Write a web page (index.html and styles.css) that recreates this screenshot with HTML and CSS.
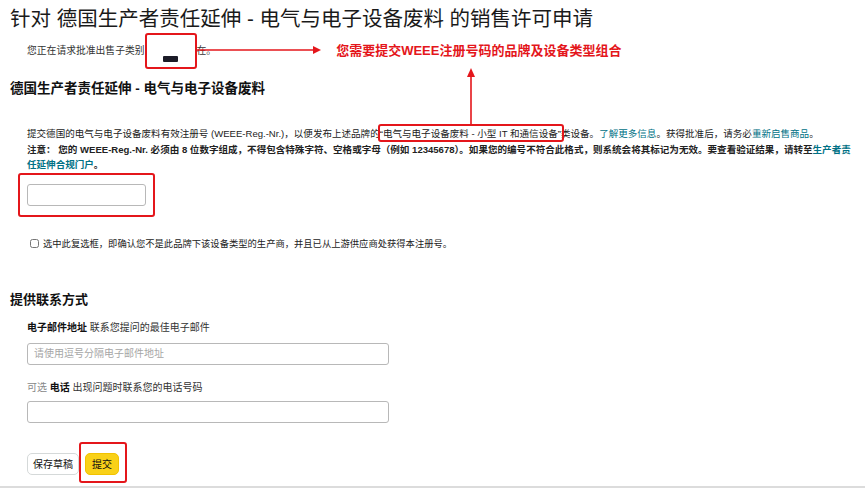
FILE: index.html
```html
<!DOCTYPE html>
<html lang="zh-CN">
<head>
  <meta charset="UTF-8" />
  <meta name="viewport" content="width=device-width, initial-scale=1.0"/>
  <title>销售许可申请</title>
  <link rel="stylesheet" href="styles.css">
</head>
<body>
  <div class="page">
    <h1 class="title">针对 德国生产者责任延伸 - 电气与电子设备废料 的销售许可申请</h1>

    <!-- 申请说明 + 标注 -->
    <div class="intro">
      <span>您正在请求批准出售子类别</span>
      <span class="redacted">
        <span class="redacted-bar"></span>
        <span class="mark mark-brand"></span>
        <svg class="arrow-right" width="124" height="10" viewBox="0 0 124 10">
          <line x1="0" y1="5" x2="116" y2="5" stroke="#e4161b" stroke-width="1.6"/>
          <polygon points="116,1 124,5 116,9" fill="#e4161b"/>
        </svg>
      </span>
      <span>在。</span>
      <span class="callout">您需要提交WEEE注册号码的品牌及设备类型组合</span>
    </div>

    <h2 class="section-title">德国生产者责任延伸 - 电气与电子设备废料</h2>

    <div class="desc">
      <p>提交德国的电气与电子设备废料有效注册号 (WEEE-Reg.-Nr.)，以便发布上述品牌的<span class="quote">“电气与电子设备废料 - 小型 IT 和通信设备”<span class="mark mark-quote"></span><svg class="arrow-up" width="10" height="57" viewBox="0 0 10 57">
            <polygon points="5,0 9,9 1,9" fill="#e4161b"/>
            <line x1="5" y1="8" x2="5" y2="57" stroke="#e4161b" stroke-width="1.6"/>
          </svg></span>类设备。<a href="#">了解更多信息</a>。获得批准后，请务必<a href="#">重新启售商品</a>。</p>
      <p class="note">注意： 您的 WEEE-Reg.-Nr. 必须由 8 位数字组成，不得包含特殊字符、空格或字母（例如 12345678）。如果您的编号不符合此格式，则系统会将其标记为无效。要查看验证结果，请转至<a href="#">生产者责任延伸合规门户</a>。</p>
    </div>

    <div class="reg-field">
      <input type="text" class="input input-small">
      <span class="mark mark-input"></span>
    </div>

    <label class="check-row">
      <input type="checkbox" class="check">
      <span>选中此复选框，即确认您不是此品牌下该设备类型的生产商，并且已从上游供应商处获得本注册号。</span>
    </label>

    <h2 class="section-title contact-title">提供联系方式</h2>

    <div class="field">
      <div class="label"><b>电子邮件地址</b> 联系您提问的最佳电子邮件</div>
      <input type="text" class="input input-wide" placeholder="请使用逗号分隔电子邮件地址">
    </div>

    <div class="field">
      <div class="label"><span class="muted">可选</span> <b>电话</b> 出现问题时联系您的电话号码</div>
      <input type="text" class="input input-wide">
    </div>

    <div class="actions">
      <button class="btn btn-draft">保存草稿</button>
      <span class="submit-wrap">
        <button class="btn btn-submit">提交</button>
        <span class="mark mark-submit"></span>
      </span>
    </div>
  </div>
  <div class="bottom-bar"></div>
</body>
</html>
```

FILE: styles.css
```css
* {
  box-sizing: border-box;
  margin: 0;
  padding: 0;
}

html, body {
  height: 100%;
  overflow: hidden;
}

body {
  font-family: 'Liberation Sans', 'Noto Sans CJK SC', sans-serif;
  color: #111;
  background: #fff;
}

.page {
  padding: 0 10px;
  height: 486px;
}

.title {
  font-size: 20.5px;
  font-weight: normal;
  line-height: 28px;
  padding-top: 5px;
  color: #1a1a1a;
}

/* 第一行说明 */
.intro {
  margin-top: 10px;
  padding-left: 17px;
  font-size: 9.8px;
  line-height: 16px;
  color: #333;
  display: flex;
  align-items: center;
}

.redacted {
  position: relative;
  display: inline-block;
  width: 52px;
  height: 16px;
}

.redacted-bar {
  position: absolute;
  left: 18px;
  top: 13px;
  width: 15px;
  height: 6px;
  background: #1c1c28;
  border-radius: 1px;
}

.arrow-right {
  position: absolute;
  left: 52px;
  top: 2px;
}

.callout {
  margin-left: 120px;
  color: #e4161b;
  font-weight: bold;
  font-size: 13px;
}

/* 红色标注框 */
.mark {
  position: absolute;
  border: 2px solid #e4161b;
  border-radius: 3px;
  pointer-events: none;
}

.mark-brand {
  left: 0;
  top: -10px;
  width: 52px;
  height: 36px;
}

.section-title {
  font-size: 13.5px;
  font-weight: bold;
  line-height: 18px;
  margin-top: 21px;
  color: #111;
}

.desc {
  margin-top: 28px;
  padding-left: 17px;
  width: 842px;
  font-size: 9.55px;
  line-height: 15.5px;
  color: #222;
}

.note {
  font-weight: bold;
}

.desc a {
  color: #007185;
  text-decoration: none;
}

.quote {
  position: relative;
}

.mark-quote {
  left: -2px;
  right: -3px;
  top: -4px;
  bottom: -3px;
}

.arrow-up {
  position: absolute;
  left: 86px;
  bottom: calc(100% + 3px);
}

/* 注册号输入框 */
.reg-field {
  position: relative;
  margin-top: 11px;
  margin-left: 17px;
  width: 119px;
  height: 22px;
}

.input {
  display: block;
  height: 22px;
  border: 1px solid #b8b8b8;
  border-radius: 3px;
  font-family: inherit;
  font-size: 10px;
  padding: 0 6px;
  color: #111;
  background: #fff;
}

.input::placeholder {
  color: #a6a6a6;
}

.input-small {
  width: 119px;
}

.input-wide {
  width: 362px;
}

.mark-input {
  left: -9px;
  top: -11px;
  right: -9px;
  bottom: -11px;
}

.check-row {
  display: flex;
  align-items: center;
  gap: 4px;
  margin-top: 31px;
  padding-left: 20px;
  font-size: 9.3px;
  line-height: 14px;
  color: #222;
}

.check {
  width: 9px;
  height: 9px;
  margin: 0;
}

.contact-title {
  margin-top: 40px;
  font-size: 13px;
}

.field {
  padding-left: 17px;
}

.field .label {
  margin-top: 12px;
  font-size: 10px;
  line-height: 14px;
  color: #333;
}

.field + .field .label {
  margin-top: 16px;
}

.label b {
  color: #111;
}

.muted {
  color: #888;
}

.field .input {
  margin-top: 8px;
}

.field + .field .input {
  margin-top: 6px;
}

.actions {
  display: flex;
  gap: 6px;
  margin-top: 30px;
  padding-left: 17px;
}

.btn {
  height: 22px;
  border-radius: 5px;
  font-family: inherit;
  font-size: 10px;
  color: #111;
  cursor: pointer;
}

.btn-draft {
  width: 52px;
  background: #fff;
  border: 1px solid #d5d9d9;
}

.btn-submit {
  width: 34px;
  background: #f9d118;
  border: 1px solid #f2c200;
}

.submit-wrap {
  position: relative;
  display: inline-block;
}

.mark-submit {
  left: -6px;
  top: -11px;
  right: -8px;
  bottom: -8px;
}

.bottom-bar {
  height: 2px;
  background: #dcdcdc;
}
```
